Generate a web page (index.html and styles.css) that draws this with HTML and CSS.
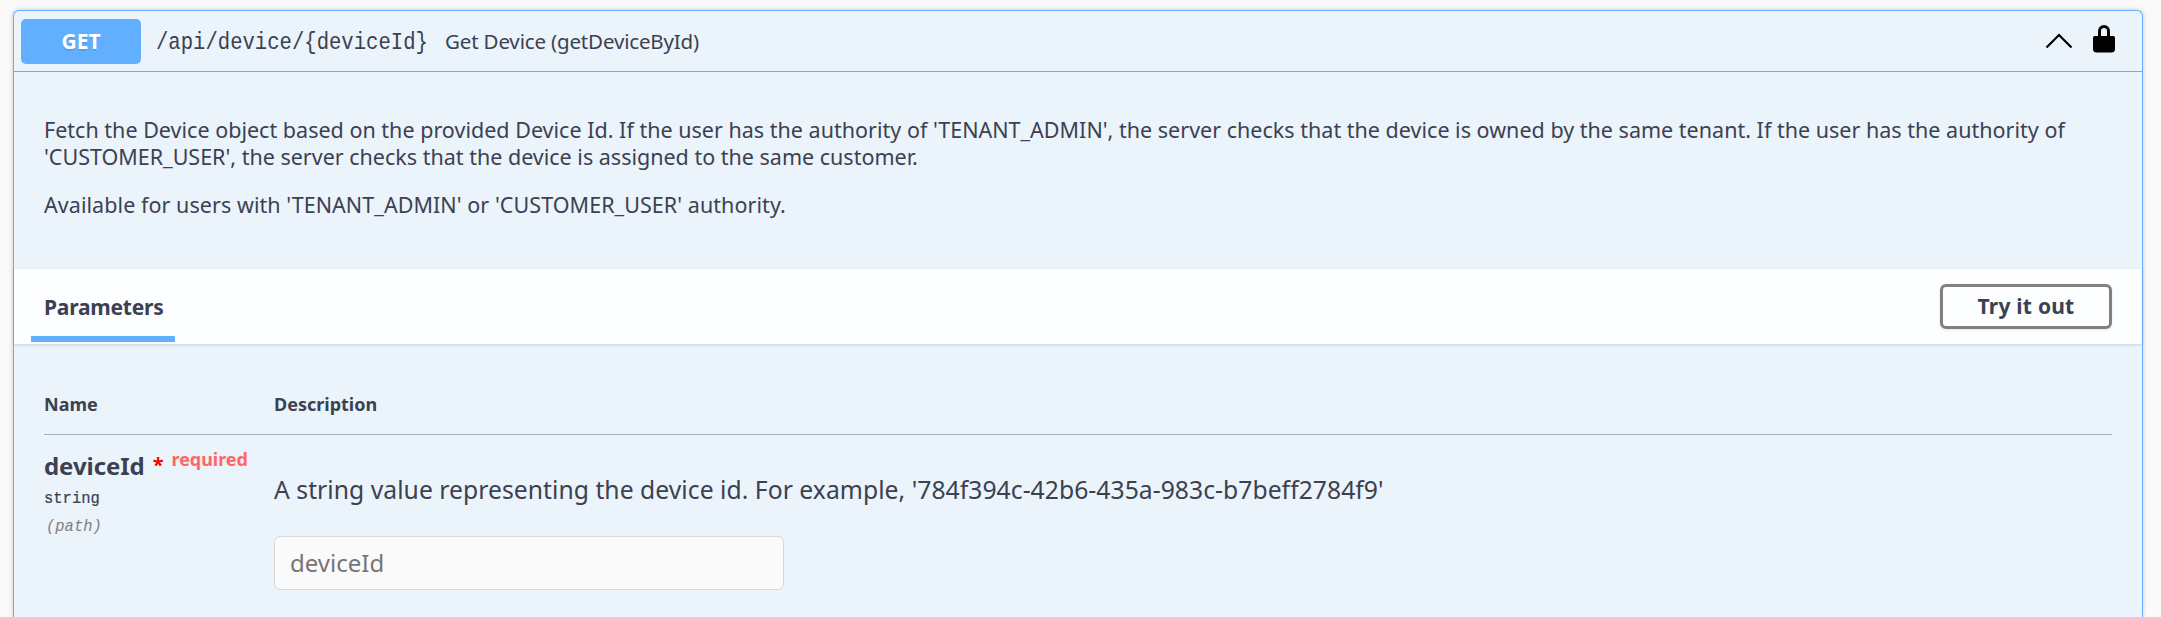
FILE: index.html
```html
<!DOCTYPE html>
<html lang="en">
<head>
<meta charset="utf-8">
<title>Get Device</title>
<link rel="stylesheet" href="styles.css">
</head>
<body>
<section class="opblock">
  <header class="summary">
    <span class="method">GET</span>
    <span class="path">/api/device/{deviceId}</span>
    <span class="summary-text">Get Device (getDeviceById)</span>
    <svg class="chevron" viewBox="0 0 28 16"><path d="M1.500 14.500 14 2l12.500 12.500"/></svg>
    <svg class="lock" viewBox="0 0 22 28"><path class="shackle" d="M6.500 12V6a4.500 4.500 0 0 1 9 0V12"/><path d="M1.500 11h19q1.500 0 1.500 1.500V24q0 3.500-4 3.500H4Q0 27.500 0 24V12.500Q0 11 1.500 11z"/></svg>
  </header>
  <div class="description">
    <p><span class="line-first">Fetch the Device object based on the provided Device Id. If the user has the authority of 'TENANT_ADMIN', the server checks that the device is owned by the same tenant. If the user has the authority of</span><br>'CUSTOMER_USER', the server checks that the device is assigned to the same customer.</p>
    <p class="availability">Available for users with 'TENANT_ADMIN' or 'CUSTOMER_USER' authority.</p>
  </div>
  <div class="section-header">
    <h4 class="tab">Parameters</h4>
    <button class="try-out">Try it out</button>
  </div>
  <div class="parameters">
    <div class="row head"><div class="col-name">Name</div><div>Description</div></div>
    <div class="row">
      <div class="col-name">
        <div class="name">deviceId<span class="star">*</span><span class="required">required</span></div>
        <div class="type">string</div>
        <div class="in">(path)</div>
      </div>
      <div class="col-desc">
        <p class="param-text">A string value representing the device id. For example, '784f394c-42b6-435a-983c-b7beff2784f9'</p>
        <input class="field" type="text" placeholder="deviceId">
      </div>
    </div>
  </div>
</section>
</body>
</html>
```
FILE: styles.css
```css
* { box-sizing: border-box; }
body { margin: 0; height: 617px; overflow: hidden; padding: 10px 18px 0 13px; background: #fafafa; color: #3b4151; font-family: "Noto Sans", sans-serif; font-size: 21px; }
p, h4 { margin: 0; }
.opblock { height: 607px; border: 1px solid #61affe; border-bottom: 0; border-radius: 6px 6px 0 0; background: #ebf3fb; box-shadow: 0 0 5px rgba(0,0,0,.19); }
.summary { display: flex; align-items: center; height: 61px; padding: 0 27px 0 7px; border-bottom: 1px solid #61affe; }
.method { width: 120px; height: 45px; border-radius: 5px; background: #61affe; color: #fff; font-weight: 700; line-height: 45px; text-align: center; text-shadow: 0 2px 0 rgba(0,0,0,.1); }
.path { margin-left: 15px; width: 274px; padding-top: 2px; font-family: "Liberation Mono", monospace; font-size: 20.600px; white-space: nowrap; transform: scaleY(1.18); }
.summary-text { margin-left: 15px; font-size: 20.500px; letter-spacing: -.160px; white-space: nowrap; }
.chevron { width: 28px; height: 16px; margin-left: auto; fill: none; stroke: #000; stroke-width: 2.200; }
.lock { width: 22px; height: 28px; margin: 0 0 4px 20px; }
.shackle { fill: none; stroke: #000; stroke-width: 3; }
.description { display: flex; flex-direction: column; gap: 21px; height: 197px; padding: 44px 30px 0; font-size: 21.500px; line-height: 27px; white-space: nowrap; }
.description p { letter-spacing: 0; }
.description .line-first { letter-spacing: .014px; }
.description .availability { letter-spacing: .060px; }
.section-header { display: flex; justify-content: space-between; height: 75px; padding: 0 30px 0 17px; background: rgba(255,255,255,.85); box-shadow: 0 1px 3px rgba(0,0,0,.14); }
.tab { width: 144px; height: 73px; padding: 24px 0 0 13px; border-bottom: 6px solid #61affe; font-size: 21px; letter-spacing: -.230px; line-height: 28px; }
.try-out { width: 172px; height: 45px; margin-top: 15px; padding: 0; border: 3px solid #808080; border-radius: 6px; background: transparent; box-shadow: 0 1px 3px rgba(0,0,0,.1); color: inherit; font: 700 21px/39px "Noto Sans", sans-serif; letter-spacing: .230px; }
.parameters { padding: 48px 30px 0; }
.row { display: flex; }
.col-name { width: 230px; flex: none; }
.head { height: 43px; border-bottom: 1px solid #a7b0ba; font-size: 18px; font-weight: 700; line-height: 24px; }
.name { display: flex; height: 50px; padding-top: 13px; font-size: 24px; font-weight: 700; line-height: 35px; letter-spacing: -.050px; white-space: nowrap; }
.star { margin-left: 8px; color: #f00; font-size: 20px; line-height: 34px; }
.required { margin-left: 8px; color: #f66; font-size: 18px; line-height: 23px; }
.type, .in { font-family: "Liberation Mono", monospace; font-size: 15.500px; line-height: 28px; transform: scaleY(1.12); }
.type { -webkit-text-stroke: .2px #3b4151; }
.in { padding-left: 2px; color: #808080; font-style: italic; }
.param-text { padding-top: 39px; font-size: 24.700px; line-height: 32px; letter-spacing: .040px; white-space: nowrap; }
.field { display: block; width: 510px; height: 54px; margin-top: 30px; padding: 0 15px 2px; border: 1px solid #d9d9d9; border-radius: 6px; background: #fafafa; font: 24px "Noto Sans", sans-serif; }
.field::placeholder { color: #757575; }
```
